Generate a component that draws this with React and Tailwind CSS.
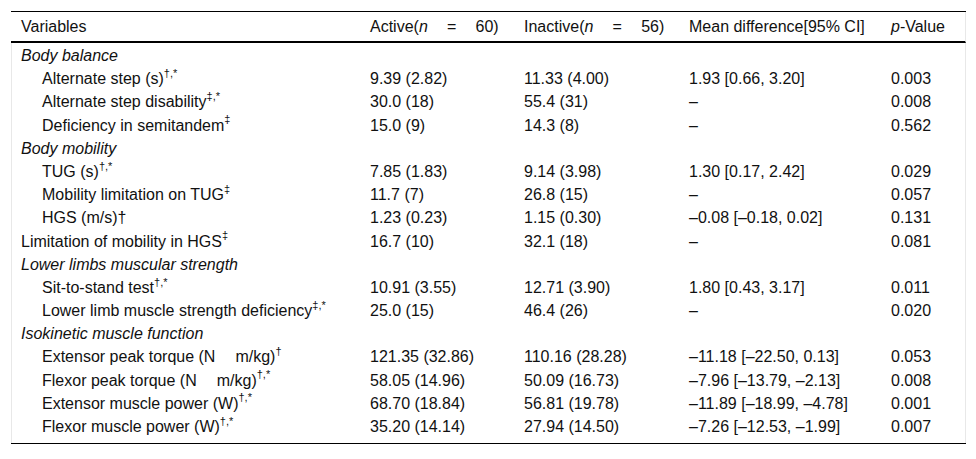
import React from "react";

const S = ({ children }) => (
  <sup className="text-[11px] leading-none relative top-[-1px] align-super">{children}</sup>
);

const NM = "\u2003\u2005";
const EQ = "\u2003\u2009=\u2003\u2009";

const rows = [
  { type: "group", label: "Body balance" },
  { label: <>Alternate step (s)<S>†,*</S></>, a: "9.39 (2.82)", b: "11.33 (4.00)", c: "1.93 [0.66, 3.20]", p: "0.003", indent: true },
  { label: <>Alternate step disability<S>‡,*</S></>, a: "30.0 (18)", b: "55.4 (31)", c: "–", p: "0.008", indent: true },
  { label: <>Deficiency in semitandem<S>‡</S></>, a: "15.0 (9)", b: "14.3 (8)", c: "–", p: "0.562", indent: true },
  { type: "group", label: "Body mobility" },
  { label: <>TUG (s)<S>†,*</S></>, a: "7.85 (1.83)", b: "9.14 (3.98)", c: "1.30 [0.17, 2.42]", p: "0.029", indent: true },
  { label: <>Mobility limitation on TUG<S>‡</S></>, a: "11.7 (7)", b: "26.8 (15)", c: "–", p: "0.057", indent: true },
  { label: <>HGS (m/s)†</>, a: "1.23 (0.23)", b: "1.15 (0.30)", c: "–0.08 [–0.18, 0.02]", p: "0.131", indent: true },
  { label: <>Limitation of mobility in HGS<S>‡</S></>, a: "16.7 (10)", b: "32.1 (18)", c: "–", p: "0.081", indent: false },
  { type: "group", label: "Lower limbs muscular strength" },
  { label: <>Sit-to-stand test<S>†,*</S></>, a: "10.91 (3.55)", b: "12.71 (3.90)", c: "1.80 [0.43, 3.17]", p: "0.011", indent: true },
  { label: <>Lower limb muscle strength deficiency<S>‡,*</S></>, a: "25.0 (15)", b: "46.4 (26)", c: "–", p: "0.020", indent: true },
  { type: "group", label: "Isokinetic muscle function" },
  { label: <>Extensor peak torque (N{NM}m/kg)<S>†</S></>, a: "121.35 (32.86)", b: "110.16 (28.28)", c: "–11.18 [–22.50, 0.13]", p: "0.053", indent: true },
  { label: <>Flexor peak torque (N{NM}m/kg)<S>†,*</S></>, a: "58.05 (14.96)", b: "50.09 (16.73)", c: "–7.96 [–13.79, –2.13]", p: "0.008", indent: true },
  { label: <>Extensor muscle power (W)<S>†,*</S></>, a: "68.70 (18.84)", b: "56.81 (19.78)", c: "–11.89 [–18.99, –4.78]", p: "0.001", indent: true },
  { label: <>Flexor muscle power (W)<S>†,*</S></>, a: "35.20 (14.14)", b: "27.94 (14.50)", c: "–7.26 [–12.53, –1.99]", p: "0.007", indent: true },
];

const grid = "grid grid-cols-[349px_154px_165px_202px_85px]";

export default function App() {
  return (
    <div className="w-[976px] h-[459px] bg-white pt-[11px] pl-[11px] text-[#111] text-[16px] font-['Liberation_Sans',Arial,sans-serif]">
      <div className="w-[955px] border-t border-black border-b border-b-black">
        <div className={`${grid} h-[31px] items-center border-b-2 border-black border-r border-r-[#e8e8e8]`}>
          <div className="pl-[10px]">Variables</div>
          <div className="pl-[10px] whitespace-pre">Active(<i>n</i>{EQ + "60)"}</div>
          <div className="pl-[10px] whitespace-pre">Inactive(<i>n</i>{EQ + "56)"}</div>
          <div className="pl-[10px]">Mean difference[95% CI]</div>
          <div className="pl-[10px]"><i>p</i>-Value</div>
        </div>
        <div className="pt-[1px] pb-[5px] border-x border-[#e8e8e8]">
          {rows.map((r, i) =>
            r.type === "group" ? (
              <div key={i} className={`${grid} h-[23.2px] items-center`}>
                <div className="pl-[9px] italic">{r.label}</div>
              </div>
            ) : (
              <div key={i} className={`${grid} h-[23.2px] items-center`}>
                <div className={r.indent ? "pl-[30px] whitespace-pre" : "pl-[9px] whitespace-pre"}>{r.label}</div>
                <div className="pl-[9px]">{r.a}</div>
                <div className="pl-[9px]">{r.b}</div>
                <div className="pl-[9px]">{r.c}</div>
                <div className="pl-[9px]">{r.p}</div>
              </div>
            )
          )}
        </div>
      </div>
    </div>
  );
}
